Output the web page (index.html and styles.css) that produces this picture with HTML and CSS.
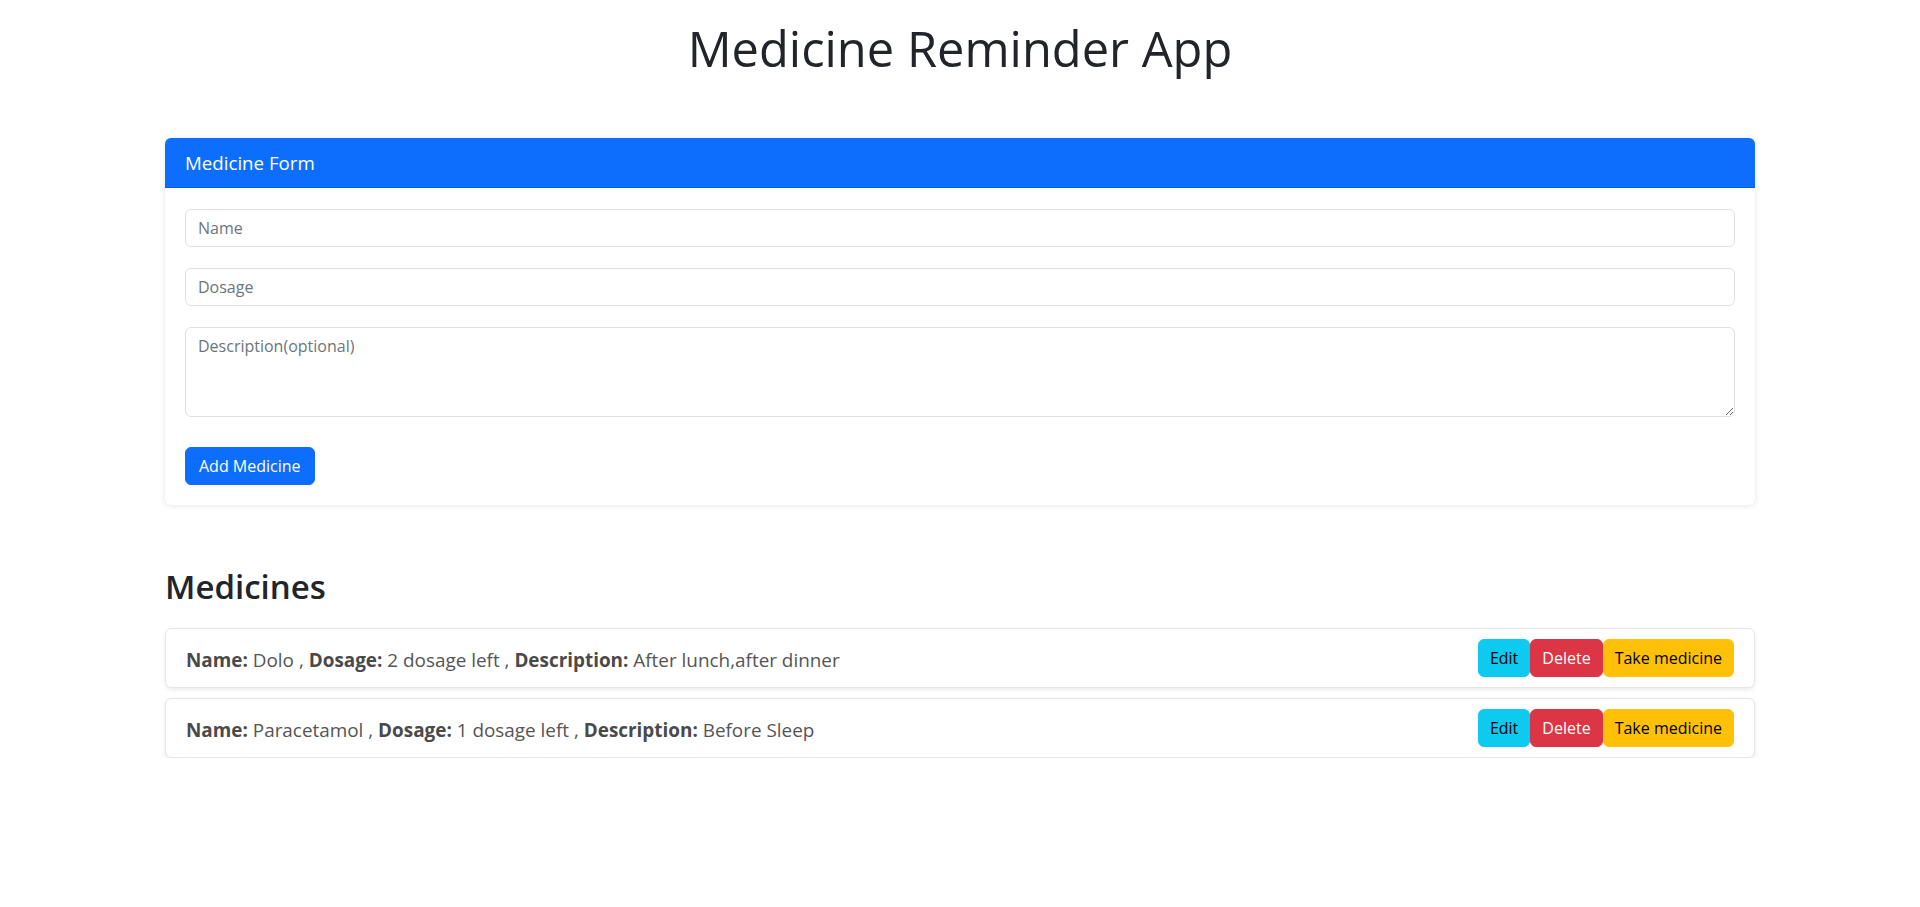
FILE: index.html
```html
<!DOCTYPE html>
<html lang="en">
<head>
<meta charset="utf-8">
<title>Medicine Reminder App</title>
<link rel="stylesheet" href="styles.css">
</head>
<body>
<div class="container">
  <h1 class="app-title">Medicine Reminder App</h1>

  <div class="card">
    <div class="card-header">Medicine Form</div>
    <div class="card-body">
      <input class="form-control" type="text" placeholder="Name">
      <input class="form-control" type="text" placeholder="Dosage">
      <textarea class="form-control form-textarea" placeholder="Description(optional)"></textarea>
      <button class="btn btn-primary btn-add" type="button">Add Medicine</button>
    </div>
  </div>

  <h2 class="section-title">Medicines</h2>

  <ul class="med-list">
    <li class="med-item">
      <div class="med-text"><b>Name:</b> Dolo , <b>Dosage:</b> 2 dosage left , <b>Description:</b> After lunch,after dinner</div>
      <div class="med-actions">
        <button class="btn btn-info" type="button">Edit</button>
        <button class="btn btn-danger" type="button">Delete</button>
        <button class="btn btn-warning" type="button">Take medicine</button>
      </div>
    </li>
    <li class="med-item">
      <div class="med-text"><b>Name:</b> Paracetamol , <b>Dosage:</b> 1 dosage left , <b>Description:</b> Before Sleep</div>
      <div class="med-actions">
        <button class="btn btn-info" type="button">Edit</button>
        <button class="btn btn-danger" type="button">Delete</button>
        <button class="btn btn-warning" type="button">Take medicine</button>
      </div>
    </li>
  </ul>
</div>
</body>
</html>
```
FILE: styles.css
```css
* { box-sizing: border-box; }

html, body {
  margin: 0;
  padding: 0;
  background: #fff;
}

body {
  font-family: "Open Sans", "Noto Sans", sans-serif;
  font-size: 16px;
  line-height: 1.5;
  color: #212529;
}

.container {
  max-width: 1590px;
  margin: 0 auto;
}

.app-title {
  margin: 19px 0 0;
  font-size: 48.8px;
  font-weight: 400;
  line-height: 1.2;
  text-align: center;
  color: #212529;
}

.card {
  margin-top: 60px;
  background: #fff;
  border-radius: 6px;
  box-shadow: 0 1px 6px rgba(0, 0, 0, 0.1);
}

.card-header {
  background: #0d6efd;
  color: #fff;
  font-size: 18.7px;
  line-height: 28px;
  padding: 11px 20px 10px;
  border-radius: 6px 6px 0 0;
  border-bottom: 1px solid rgba(0, 0, 0, 0.15);
}

.card-body {
  display: flex;
  flex-direction: column;
  align-items: flex-start;
  padding: 21px 20px 20px;
}

.form-control {
  display: block;
  width: 100%;
  height: 38px;
  margin: 0 0 21px;
  padding: 6px 12px;
  font-family: inherit;
  font-size: 16px;
  line-height: 24px;
  color: #212529;
  background: #fff;
  border: 1px solid #dee2e6;
  border-radius: 6px;
  outline: none;
}

.form-control::placeholder {
  color: #6c757d;
  opacity: 1;
}

.form-textarea {
  height: 90px;
  margin-bottom: 30px;
  resize: vertical;
}

.btn {
  display: inline-block;
  height: 38px;
  margin: 0;
  padding: 6px 11px;
  font-family: inherit;
  font-size: 16px;
  line-height: 24px;
  border: 1px solid transparent;
  border-radius: 6px;
  cursor: pointer;
  white-space: nowrap;
}

.btn-primary {
  background: #0d6efd;
  border-color: #0d6efd;
  color: #fff;
}

.btn-add {
  padding: 6px 13px;
}

.btn-info {
  background: #0dcaf0;
  border-color: #0dcaf0;
  color: #000;
}

.btn-danger {
  background: #dc3545;
  border-color: #dc3545;
  color: #fff;
}

.btn-warning {
  background: #ffc107;
  border-color: #ffc107;
  color: #000;
}

.section-title {
  margin: 62px 0 21px 0;
  font-size: 33px;
  font-weight: 600;
  line-height: 40px;
  color: #212529;
}

.med-list {
  list-style: none;
  margin: 0;
  padding: 0;
  display: flex;
  flex-direction: column;
  gap: 10px;
}

.med-item {
  display: flex;
  align-items: center;
  justify-content: space-between;
  padding: 10px 20px;
  background: #fff;
  border: 1px solid #e3e5e8;
  border-radius: 6px;
  box-shadow: 0 2px 4px rgba(0, 0, 0, 0.08);
}

.med-text {
  padding-top: 5px;
  font-size: 18.9px;
  line-height: 28px;
  color: #555;
}

.med-text b {
  font-weight: 700;
  color: #4a4a4a;
}

.med-actions {
  display: flex;
}
```
